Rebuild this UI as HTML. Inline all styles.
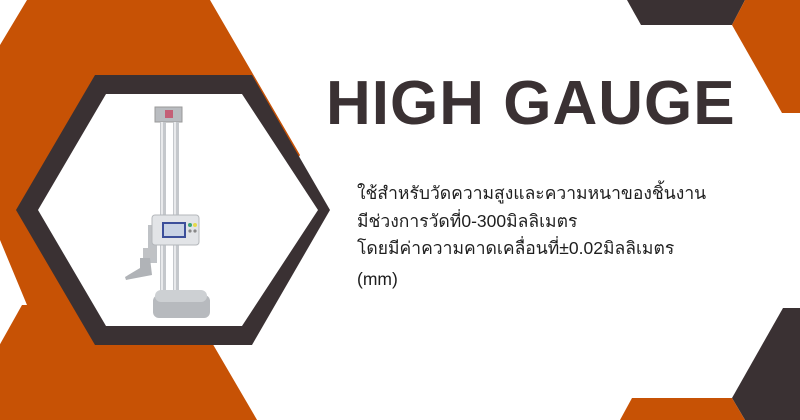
<!DOCTYPE html>
<html><head><meta charset="utf-8"><style>
html,body{margin:0;padding:0;width:800px;height:420px;overflow:hidden;background:#fff}
.t{position:absolute;left:326px;top:68px;font-family:"Liberation Sans",sans-serif;font-weight:bold;font-size:62px;color:#3a3133;letter-spacing:1px;white-space:nowrap;line-height:72px}
.d{position:absolute;left:357px;top:180px;font-family:"Liberation Sans","Noto Sans CJK SC",sans-serif;font-size:17.5px;color:#1e1e1e;line-height:27.5px;white-space:nowrap}
</style></head><body>
<svg width="800" height="420" style="position:absolute;left:0;top:0">
<polygon fill="#c75205" points="27,0 210,0 300,155 210,305 27,305 0,240 -10,240 -10,62 0,45"/>
<polygon fill="#c75205" points="22,305 190,305 260,425 -10,425 -10,362"/>
<polygon fill="#3a3133" points="95,75 252,75 330,210 252,345 95,345 16,210"/>
<polygon fill="#fff" points="106,94 242,94 318,210 242,326 106,326 38,210"/>
<polygon fill="#3a3133" points="627,0 745,0 732,25 641,25"/>
<polygon fill="#c75205" points="745,0 800,0 800,113 782,113 732,25"/>
<polygon fill="#3a3133" points="783,308 800,308 800,420 745,420 732,398"/>
<polygon fill="#c75205" points="632,398 732,398 745,420 620,420"/>
<rect x="155" y="107" width="27" height="15" fill="#b9bcc0" stroke="#999" stroke-width="1"/>
<rect x="165" y="110" width="8" height="8" fill="#c24" opacity=".6"/>
<rect x="160" y="122" width="6" height="180" fill="#c5c8cc"/><rect x="161" y="122" width="2" height="180" fill="#e9eaec"/>
<rect x="173" y="122" width="6" height="180" fill="#c5c8cc"/><rect x="174" y="122" width="2" height="180" fill="#e9eaec"/>
<rect x="148" y="225" width="9" height="38" fill="#bfc2c6"/>
<polygon fill="#b0b3b7" points="125,277 140,268 140,258 150,258 152,275 126,280"/>
<rect x="143" y="248" width="12" height="10" fill="#c0c2c5"/>
<rect x="152" y="215" width="47" height="30" rx="3" fill="#e2e4e7" stroke="#b4b7bb"/>
<rect x="162" y="222" width="24" height="16" fill="#3c4f9a"/><rect x="164" y="224" width="20" height="12" fill="#c9d3e4"/>
<circle cx="190" cy="225" r="2" fill="#3ba37b"/><circle cx="195" cy="225" r="2" fill="#e5d94a"/>
<circle cx="190" cy="231" r="1.6" fill="#888"/><circle cx="195" cy="231" r="1.6" fill="#888"/>
<rect x="153" y="295" width="57" height="23" rx="6" fill="#b7babe"/>
<rect x="155" y="290" width="52" height="12" rx="6" fill="#cdd0d3"/>
</svg>
<div class="t">HIGH GAUGE</div>
<div class="d">ใช้สำหรับวัดความสูงและความหนาของชิ้นงาน<br>มีช่วงการวัดที่0-300มิลลิเมตร<br>โดยมีค่าความคาดเคลื่อนที่±0.02มิลลิเมตร<br><span style="position:relative;top:3px">(mm)</span></div>
</body></html>
